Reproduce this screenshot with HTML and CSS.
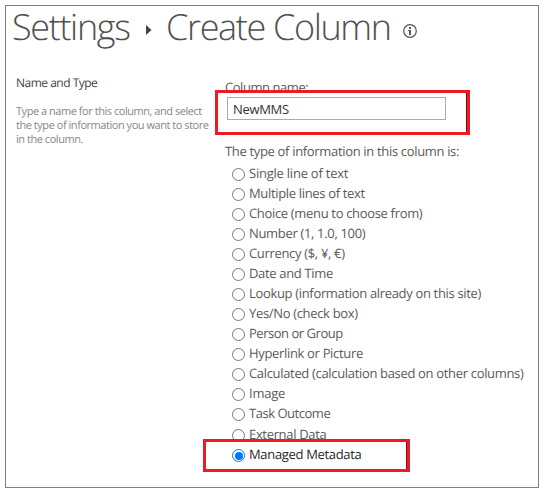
FILE: index.html
```
<!DOCTYPE html>
<html lang="en">
<head>
<meta charset="utf-8">
<title>Create Column</title>
<link rel="stylesheet" href="styles.css">
</head>
<body>
<main class="page">
  <h1 class="title">
    <span class="crumb">Settings</span>
    <svg class="arrow" width="6" height="10" viewBox="0 0 6 10"><path d="M0 0L5.5 5L0 10Z" fill="#444"/></svg>
    <span class="current">Create Column</span>
    <svg class="info" width="14" height="14" viewBox="0 0 14 14"><circle cx="7" cy="7" r="6.3" fill="none" stroke="#555" stroke-width="1.2"/><path d="M6 3h2v2H6zM5 6h3v5H6V7H5z" fill="#555"/></svg>
  </h1>
  <div class="columns">
    <section class="intro">
      <h2>Name and Type</h2>
      <p>Type a name for this column, and select<br>the type of information you want to store<br>in the column.</p>
    </section>
    <form class="fields">
      <label class="name-label" for="name">Column name:</label>
      <input class="name" id="name" type="text" value="NewMMS">
      <div class="type-label">The type of information in this column is:</div>
      <div class="options">
        <label class="option loose"><span class="radio"></span><span>Single line of text</span></label>
        <label class="option"><span class="radio"></span><span>Multiple lines of text</span></label>
        <label class="option"><span class="radio"></span><span>Choice (menu to choose from)</span></label>
        <label class="option"><span class="radio"></span><span>Number (1, 1.0, 100)</span></label>
        <label class="option"><span class="radio"></span><span>Currency ($, ¥, €)</span></label>
        <label class="option"><span class="radio"></span><span>Date and Time</span></label>
        <label class="option"><span class="radio"></span><span>Lookup (information already on this site)</span></label>
        <label class="option"><span class="radio"></span><span>Yes/No (check box)</span></label>
        <label class="option tight"><span class="radio"></span><span>Person or Group</span></label>
        <label class="option"><span class="radio"></span><span>Hyperlink or Picture</span></label>
        <label class="option"><span class="radio"></span><span>Calculated (calculation based on other columns)</span></label>
        <label class="option loose"><span class="radio"></span><span>Image</span></label>
        <label class="option tight"><span class="radio"></span><span>Task Outcome</span></label>
        <label class="option external"><span class="radio"></span><span>External Data</span></label>
        <label class="option selected"><span class="radio"></span><span>Managed Metadata</span></label>
      </div>
    </form>
  </div>
</main>
<div class="highlight highlight-name"></div>
<div class="highlight highlight-type"></div>
</body>
</html>
```
FILE: styles.css
```
* { box-sizing: border-box; }
body {
  margin: 0;
  padding: 5px;
  background: #fff;
  font-family: "Open Sans", "Noto Sans", sans-serif;
  font-size: 13px;
  font-stretch: 93%;
  letter-spacing: -0.33px;
  text-rendering: geometricPrecision;
  color: #5a5a5a;
}
.page {
  width: 534px;
  height: 483px;
  border: 1px solid #7f7f7f;
}
.title {
  display: flex;
  align-items: center;
  height: 42px;
  margin: 0;
  padding-left: 6px;
  font-size: 36px;
  font-weight: 300;
  line-height: 42px;
  letter-spacing: -1.35px;
  white-space: nowrap;
  color: #505050;
}
.crumb { width: 118px; }
.arrow { margin: 6px 14px 0 16px; }
.current { width: 229px; }
.info { margin: 8px 0 0 8px; }
.columns { display: flex; }
.intro { width: 219px; padding: 26px 0 0 10px; white-space: nowrap; }
.intro h2 { margin: 0; font-size: 12px; font-weight: 400; line-height: 18px; letter-spacing: -0.5px; color: #444; }
.intro p { margin: 13px 0 0; font-size: 11px; line-height: 14px; letter-spacing: -0.46px; color: #888; }
.fields { display: flex; flex-direction: column; padding-top: 30px; white-space: nowrap; }
.name-label { height: 19px; line-height: 18px; letter-spacing: -0.45px; }
.name {
  width: 219px;
  height: 23px;
  margin-left: 2px;
  padding: 0 5px;
  border: 1px solid #ababab;
  font: inherit;
  letter-spacing: inherit;
  color: #333;
}
.type-label { margin-top: 21px; line-height: 20px; }
.options { margin-top: 3px; padding-left: 7px; }
.option { display: flex; align-items: center; gap: 4px; height: 20px; line-height: 18px; }
.option > span:last-child { margin-bottom: 2px; }
.loose { letter-spacing: -0.23px; }
.tight { letter-spacing: -0.47px; }
.radio {
  width: 13px;
  height: 13px;
  margin-top: 1px;
  border: 1px solid #767676;
  border-radius: 50%;
}
.external { margin-top: 1px; }
.selected { color: #262626; }
.selected .radio { border-color: #0075ff; padding: 1.5px; background: #0075ff content-box; }
.highlight { position: absolute; border: 3px solid #ed1c24; }
.highlight-name { left: 215px; top: 90px; width: 255px; height: 45px; box-shadow: inset -1px 0 #7a1015; }
.highlight-type { left: 203px; top: 439px; width: 207px; height: 33px; box-shadow: inset -1px 0 #7a1015; }
```
